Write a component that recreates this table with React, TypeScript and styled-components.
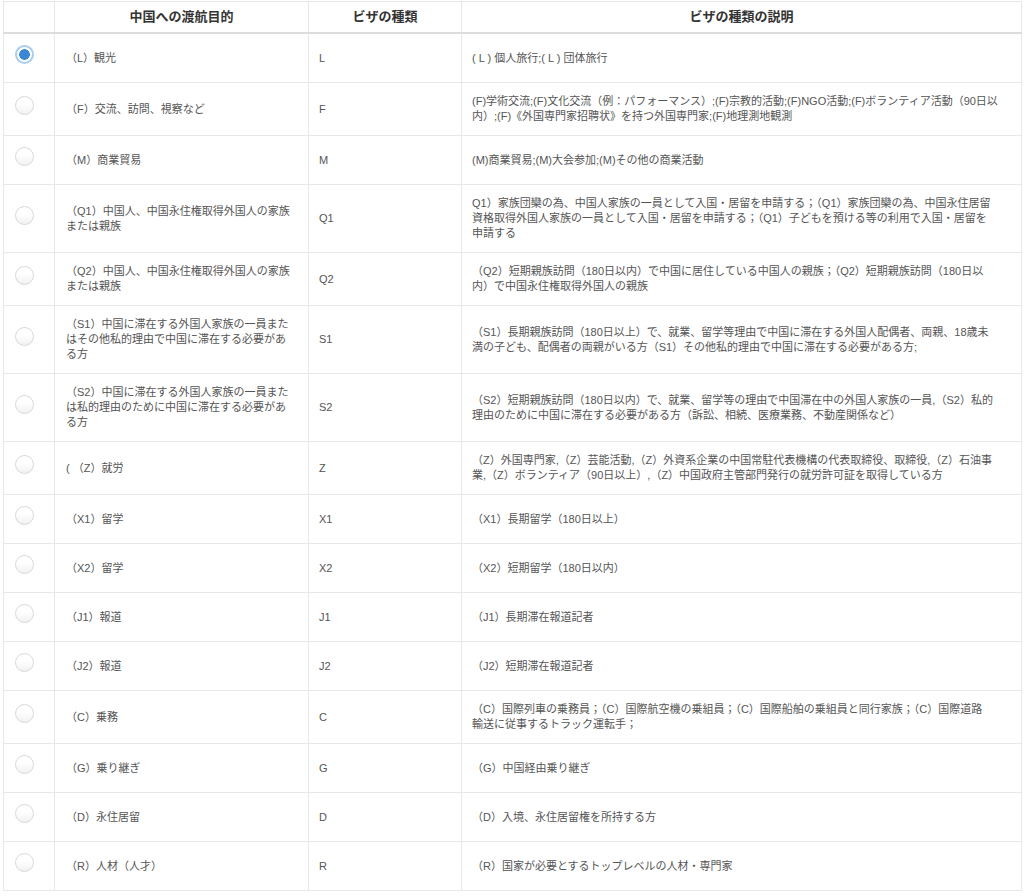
import React from "react";
import styled, { createGlobalStyle } from "styled-components";

const GlobalStyle = createGlobalStyle`
  html, body {
    margin: 0;
    padding: 0;
    background: #ffffff;
  }
  body {
    font-family: "Liberation Sans", "Noto Sans CJK JP", Arial, sans-serif;
    color: #555555;
  }
`;

const Page = styled.div`
  padding: 1px 3px 0 3px;
`;

const Table = styled.table`
  width: 1019px;
  border-collapse: collapse;
  table-layout: fixed;
  border: 1px solid #e6e6e6;
`;

const HeadCell = styled.th`
  height: 16px;
  padding: 7px 10px;
  font-size: 13px;
  line-height: 16px;
  font-weight: 700;
  color: #333333;
  text-align: center;
  background: #ffffff;
  border: 1px solid #e6e6e6;
  border-bottom: 2px solid #dddddd;
`;

const Cell = styled.td<{ $indent?: number }>`
  padding: 11px 10px 11px ${(p) => p.$indent ?? 10}px;
  vertical-align: middle;
  font-size: 11px;
  line-height: 15px;
  color: #555555;
  border: 1px solid #e8e8e8;
  text-align: left;
`;

const RadioCell = styled.td`
  padding: 11px 0 11px 11px;
  vertical-align: middle;
  border: 1px solid #e8e8e8;
`;

const Radio = styled.input`
  appearance: none;
  -webkit-appearance: none;
  display: block;
  box-sizing: border-box;
  width: 19px;
  height: 19px;
  margin: 0 0 7px 0;
  border-radius: 50%;
  border: 1px solid #d9d9d9;
  background: linear-gradient(#ffffff 40%, #f1f1f1);
  cursor: pointer;

  &:checked {
    border: 2px solid #a9cdf1;
    background: radial-gradient(circle, #3b87d5 0 5px, #ffffff 5.6px);
  }
`;

const Line = styled.span`
  display: block;
  white-space: nowrap;
`;

type Row = {
  code: string;
  purpose: string[];
  desc: string[];
};

const rows: Row[] = [
  { code: "L", purpose: ["（L）観光"], desc: ["( L ) 個人旅行;( L ) 団体旅行"] },
  {
    code: "F",
    purpose: ["（F）交流、訪問、視察など"],
    desc: [
      "(F)学術交流;(F)文化交流（例：パフォーマンス）;(F)宗教的活動;(F)NGO活動;(F)ボランティア活動（90日以",
      "内）;(F)《外国専門家招聘状》を持つ外国専門家;(F)地理測地観測",
    ],
  },
  { code: "M", purpose: ["（M）商業貿易"], desc: ["(M)商業貿易;(M)大会参加;(M)その他の商業活動"] },
  {
    code: "Q1",
    purpose: ["（Q1）中国人、中国永住権取得外国人の家族", "または親族"],
    desc: [
      "Q1）家族団欒の為、中国人家族の一員として入国・居留を申請する；（Q1）家族団欒の為、中国永住居留",
      "資格取得外国人家族の一員として入国・居留を申請する；（Q1）子どもを預ける等の利用で入国・居留を",
      "申請する",
    ],
  },
  {
    code: "Q2",
    purpose: ["（Q2）中国人、中国永住権取得外国人の家族", "または親族"],
    desc: [
      "（Q2）短期親族訪問（180日以内）で中国に居住している中国人の親族；（Q2）短期親族訪問（180日以",
      "内）で中国永住権取得外国人の親族",
    ],
  },
  {
    code: "S1",
    purpose: [
      "（S1）中国に滞在する外国人家族の一員また",
      "はその他私的理由で中国に滞在する必要があ",
      "る方",
    ],
    desc: [
      "（S1）長期親族訪問（180日以上）で、就業、留学等理由で中国に滞在する外国人配偶者、両親、18歳未",
      "満の子ども、配偶者の両親がいる方（S1）その他私的理由で中国に滞在する必要がある方;",
    ],
  },
  {
    code: "S2",
    purpose: [
      "（S2）中国に滞在する外国人家族の一員また",
      "は私的理由のために中国に滞在する必要があ",
      "る方",
    ],
    desc: [
      "（S2）短期親族訪問（180日以内）で、就業、留学等の理由で中国滞在中の外国人家族の一員,（S2）私的",
      "理由のために中国に滞在する必要がある方（訴訟、相続、医療業務、不動産関係など）",
    ],
  },
  {
    code: "Z",
    purpose: ["( （Z）就労"],
    desc: [
      "（Z）外国専門家,（Z）芸能活動,（Z）外資系企業の中国常駐代表機構の代表取締役、取締役,（Z）石油事",
      "業,（Z）ボランティア（90日以上）,（Z）中国政府主管部門発行の就労許可証を取得している方",
    ],
  },
  { code: "X1", purpose: ["（X1）留学"], desc: ["（X1）長期留学（180日以上）"] },
  { code: "X2", purpose: ["（X2）留学"], desc: ["（X2）短期留学（180日以内）"] },
  { code: "J1", purpose: ["（J1）報道"], desc: ["（J1）長期滞在報道記者"] },
  { code: "J2", purpose: ["（J2）報道"], desc: ["（J2）短期滞在報道記者"] },
  {
    code: "C",
    purpose: ["（C）乗務"],
    desc: [
      "（C）国際列車の乗務員；（C）国際航空機の乗組員；（C）国際船舶の乗組員と同行家族；（C）国際道路",
      "輸送に従事するトラック運転手；",
    ],
  },
  { code: "G", purpose: ["（G）乗り継ぎ"], desc: ["（G）中国経由乗り継ぎ"] },
  { code: "D", purpose: ["（D）永住居留"], desc: ["（D）入境、永住居留権を所持する方"] },
  { code: "R", purpose: ["（R）人材（人才）"], desc: ["（R）国家が必要とするトップレベルの人材・専門家"] },
];

const Lines = ({ items }: { items: string[] }) => (
  <>
    {items.map((t, i) => (
      <Line key={i}>{t}</Line>
    ))}
  </>
);

export default function App() {
  return (
    <Page>
      <GlobalStyle />
      <Table>
        <colgroup>
          <col style={{ width: 51 }} />
          <col style={{ width: 254 }} />
          <col style={{ width: 153 }} />
          <col />
        </colgroup>
        <thead>
          <tr>
            <HeadCell />
            <HeadCell>中国への渡航目的</HeadCell>
            <HeadCell>ビザの種類</HeadCell>
            <HeadCell>ビザの種類の説明</HeadCell>
          </tr>
        </thead>
        <tbody>
          {rows.map((r, i) => (
            <tr key={r.code}>
              <RadioCell>
                <Radio type="radio" name="visa" value={r.code} defaultChecked={i === 0} />
              </RadioCell>
              <Cell $indent={11}>
                <Lines items={r.purpose} />
              </Cell>
              <Cell>{r.code}</Cell>
              <Cell>
                <Lines items={r.desc} />
              </Cell>
            </tr>
          ))}
        </tbody>
      </Table>
    </Page>
  );
}
